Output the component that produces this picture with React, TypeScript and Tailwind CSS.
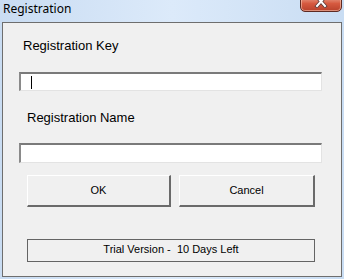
export default function App() {
  return (
    <div className="w-[344px] h-[279px] bg-gradient-to-r from-[#c9dcf2] via-[#dceafa] to-[#c9ddf3] overflow-hidden font-['Liberation_Sans',sans-serif]">
      {/* Title bar */}
      <div className="h-[22px] flex items-start relative">
        <span className="ml-[3px] mt-[2px] text-[12px] leading-[14px] text-black font-['Noto_Sans',sans-serif]">Registration</span>
        <div className="absolute left-[300px] top-[-5px] w-[42px] h-[17px] rounded-b-[5px] border border-[#5e2a22] bg-gradient-to-b from-[#e9a894] via-[#d65a40] to-[#b8412b] shadow-[inset_0_0_0_1px_rgba(255,220,200,0.5)] flex items-start justify-center">
          <svg width="14" height="12" viewBox="0 0 14 12">
            <path d="M3 1 L11 10 M11 1 L3 10" stroke="#5a3a38" strokeWidth="3.6" strokeLinecap="square" />
            <path d="M3 1 L11 10 M11 1 L3 10" stroke="#ffffff" strokeWidth="2" strokeLinecap="square" />
          </svg>
        </div>
      </div>

      {/* Client area */}
      <div className="mx-[2px] h-[255px] border border-[#6e6e6e] bg-[#f0f0f0] flex flex-col text-[13px] text-black">
        <div className="ml-[20px] mt-[16px] h-[14px] leading-[14px]">Registration Key</div>
        <div className="ml-[16px] mt-[19px] w-[303px] h-[19px] border-t-2 border-l-2 border-b border-r border-t-[#7a7a7a] border-l-[#8a8a8a] border-b-[#e3e3e3] border-r-[#e3e3e3] bg-white flex items-center">
          <div className="ml-[10px] w-px h-[13px] bg-black" />
        </div>
        <div className="ml-[24px] mt-[20px] h-[14px] leading-[14px]">Registration Name</div>
        <div className="ml-[16px] mt-[18px] w-[303px] h-[20px] border-t-2 border-l-2 border-b border-r border-t-[#7a7a7a] border-l-[#8a8a8a] border-b-[#e3e3e3] border-r-[#e3e3e3] bg-white" />
        <div className="ml-[24px] mt-[12px] flex gap-[8px] text-[11px]">
          <div className="w-[144px] h-[32px] border-t border-l border-t-white border-l-white border-b-2 border-r-2 border-b-[#6a6a6a] border-r-[#6a6a6a] flex items-center justify-center">OK</div>
          <div className="w-[136px] h-[32px] border-t border-l border-t-white border-l-white border-b-2 border-r-2 border-b-[#6a6a6a] border-r-[#6a6a6a] flex items-center justify-center">Cancel</div>
        </div>
        <div className="ml-[24px] mt-[32px] w-[288px] h-[23px] border border-[#646464] flex items-center justify-center pb-[3px] whitespace-pre text-[11px]">Trial Version -  10 Days Left</div>
      </div>
    </div>
  );
}
